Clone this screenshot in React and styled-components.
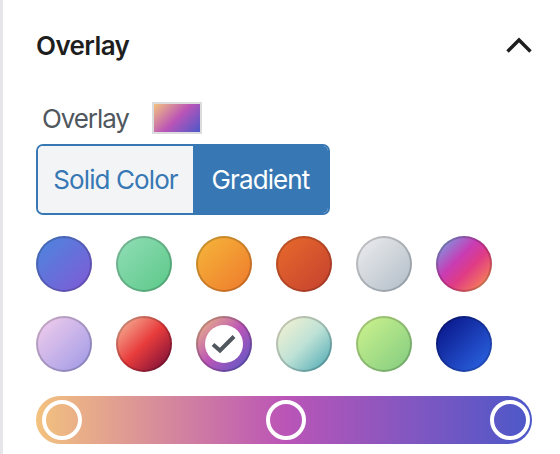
import React from "react";
import styled, { createGlobalStyle } from "styled-components";

const GlobalStyle = createGlobalStyle`
  html, body { margin: 0; padding: 0; background: #fff; }
  body { font-family: Inter, "Noto Sans", "Liberation Sans", sans-serif; -webkit-font-smoothing: antialiased; }
  * { box-sizing: border-box; }
`;

const DUSK = "#f3c27e 0%, #bb55b7 50%, #4c58c9 100%";

const Panel = styled.div`
  width: 560px;
  height: 454px;
  border-left: 3px solid #e6e6ea;
  padding: 0 27px 0 33px;
  overflow: hidden;
`;

const Header = styled.div`
  height: 90px;
  display: flex;
  align-items: center;
  justify-content: space-between;
`;

const Title = styled.h2`
  margin: 0;
  font-size: 26px;
  font-weight: 600;
  color: #1e1e1e;
  letter-spacing: -0.6px;
`;

const Body = styled.div`
  display: flex;
  flex-direction: column;
  padding-top: 12px;
`;

const LabelRow = styled.div`
  display: flex;
  align-items: center;
  gap: 23px;
  height: 32px;
  padding-left: 6px;
`;

const Label = styled.span`
  font-size: 26px;
  color: #50575e;
  letter-spacing: -1.1px;
`;

const Preview = styled.span`
  width: 50px;
  height: 32px;
  border: 2px solid #dcdcde;
  background: linear-gradient(135deg, ${DUSK});
  background-clip: padding-box;
`;

const Toggle = styled.div`
  margin-top: 10px;
  display: flex;
  width: 294px;
  height: 71px;
  border: 2px solid #3778b4;
  border-radius: 7px;
  overflow: hidden;
`;

const ToggleButton = styled.button`
  flex: ${(p) => p.$grow};
  display: flex;
  align-items: center;
  justify-content: center;
  border: 0;
  margin: 0;
  padding: 0;
  font-family: inherit;
  font-size: 26px;
  font-weight: 400;
  letter-spacing: -0.9px;
  background: ${(p) => (p.$active ? "#3778b4" : "#f3f4f6")};
  color: ${(p) => (p.$active ? "#ffffff" : "#3778b4")};
`;

const Swatches = styled.div`
  margin-top: 21px;
  display: grid;
  grid-template-columns: repeat(6, 56px);
  gap: 24px;
`;

const Swatch = styled.div`
  width: 56px;
  height: 56px;
  border-radius: 50%;
  background: ${(p) => p.$bg};
  box-shadow: inset 0 0 0 2px rgba(0, 0, 0, 0.18);
  display: flex;
  align-items: center;
  justify-content: center;
`;

const Selected = styled.div`
  width: 38px;
  height: 38px;
  border-radius: 50%;
  background: #fff;
  display: flex;
  align-items: center;
  justify-content: center;
`;

const Bar = styled.div`
  margin-top: 24px;
  position: relative;
  width: 496px;
  height: 48px;
  border-radius: 24px;
  background: linear-gradient(90deg, ${DUSK});
`;

const Handle = styled.span`
  position: absolute;
  top: 4px;
  width: 40px;
  height: 40px;
  margin-left: -20px;
  border-radius: 50%;
  border: 4px solid #fff;
`;

const gradients = [
  "linear-gradient(135deg, #4a88de 0%, #8258d6 100%)",
  "linear-gradient(135deg, #93deb8 0%, #5ac887 100%)",
  "linear-gradient(135deg, #f6b83a 0%, #ee782c 100%)",
  "linear-gradient(135deg, #e96b2c 0%, #c4402f 100%)",
  "linear-gradient(135deg, #eeeef0 0%, #b0bcc6 100%)",
  "linear-gradient(135deg, #5ac8c8 0%, #9778d1 20%, #c83cb4 40%, #e03c84 60%, #f06c64 80%, #f2e05a 100%)",
  "linear-gradient(135deg, #f6d0ec 0%, #9c98e6 100%)",
  "linear-gradient(135deg, #f8c6a6 0%, #e83c3c 50%, #6a0838 100%)",
  `linear-gradient(135deg, ${DUSK})`,
  "linear-gradient(135deg, #fcf4d2 0%, #bfe2d6 50%, #44a4b2 100%)",
  "linear-gradient(135deg, #d0f48e 0%, #80ca80 100%)",
  "linear-gradient(135deg, #060e80 0%, #2e6aea 100%)",
];

const Chevron = () => (
  <svg width="28" height="18" viewBox="0 0 28 18" fill="none">
    <path d="M2.5 15.5 L14 4 L25.5 15.5" stroke="#1e1e1e" strokeWidth="3.4" />
  </svg>
);

const Check = () => (
  <svg width="26" height="20" viewBox="0 0 26 20" fill="none">
    <path d="M2 10.5 L9 16.5 L23 2.5" stroke="#50575e" strokeWidth="4" />
  </svg>
);

export default function App() {
  return (
    <>
      <GlobalStyle />
      <Panel>
        <Header>
          <Title>Overlay</Title>
          <Chevron />
        </Header>
        <Body>
          <LabelRow>
            <Label>Overlay</Label>
            <Preview />
          </LabelRow>
          <Toggle>
            <ToggleButton $grow="0 0 155px">Solid Color</ToggleButton>
            <ToggleButton $grow="1" $active>Gradient</ToggleButton>
          </Toggle>
          <Swatches>
            {gradients.map((g, i) => (
              <Swatch key={i} $bg={g}>
                {i === 8 && (
                  <Selected>
                    <Check />
                  </Selected>
                )}
              </Swatch>
            ))}
          </Swatches>
          <Bar>
            <Handle style={{ left: "26px" }} />
            <Handle style={{ left: "250px" }} />
            <Handle style={{ left: "474px" }} />
          </Bar>
        </Body>
      </Panel>
    </>
  );
}
